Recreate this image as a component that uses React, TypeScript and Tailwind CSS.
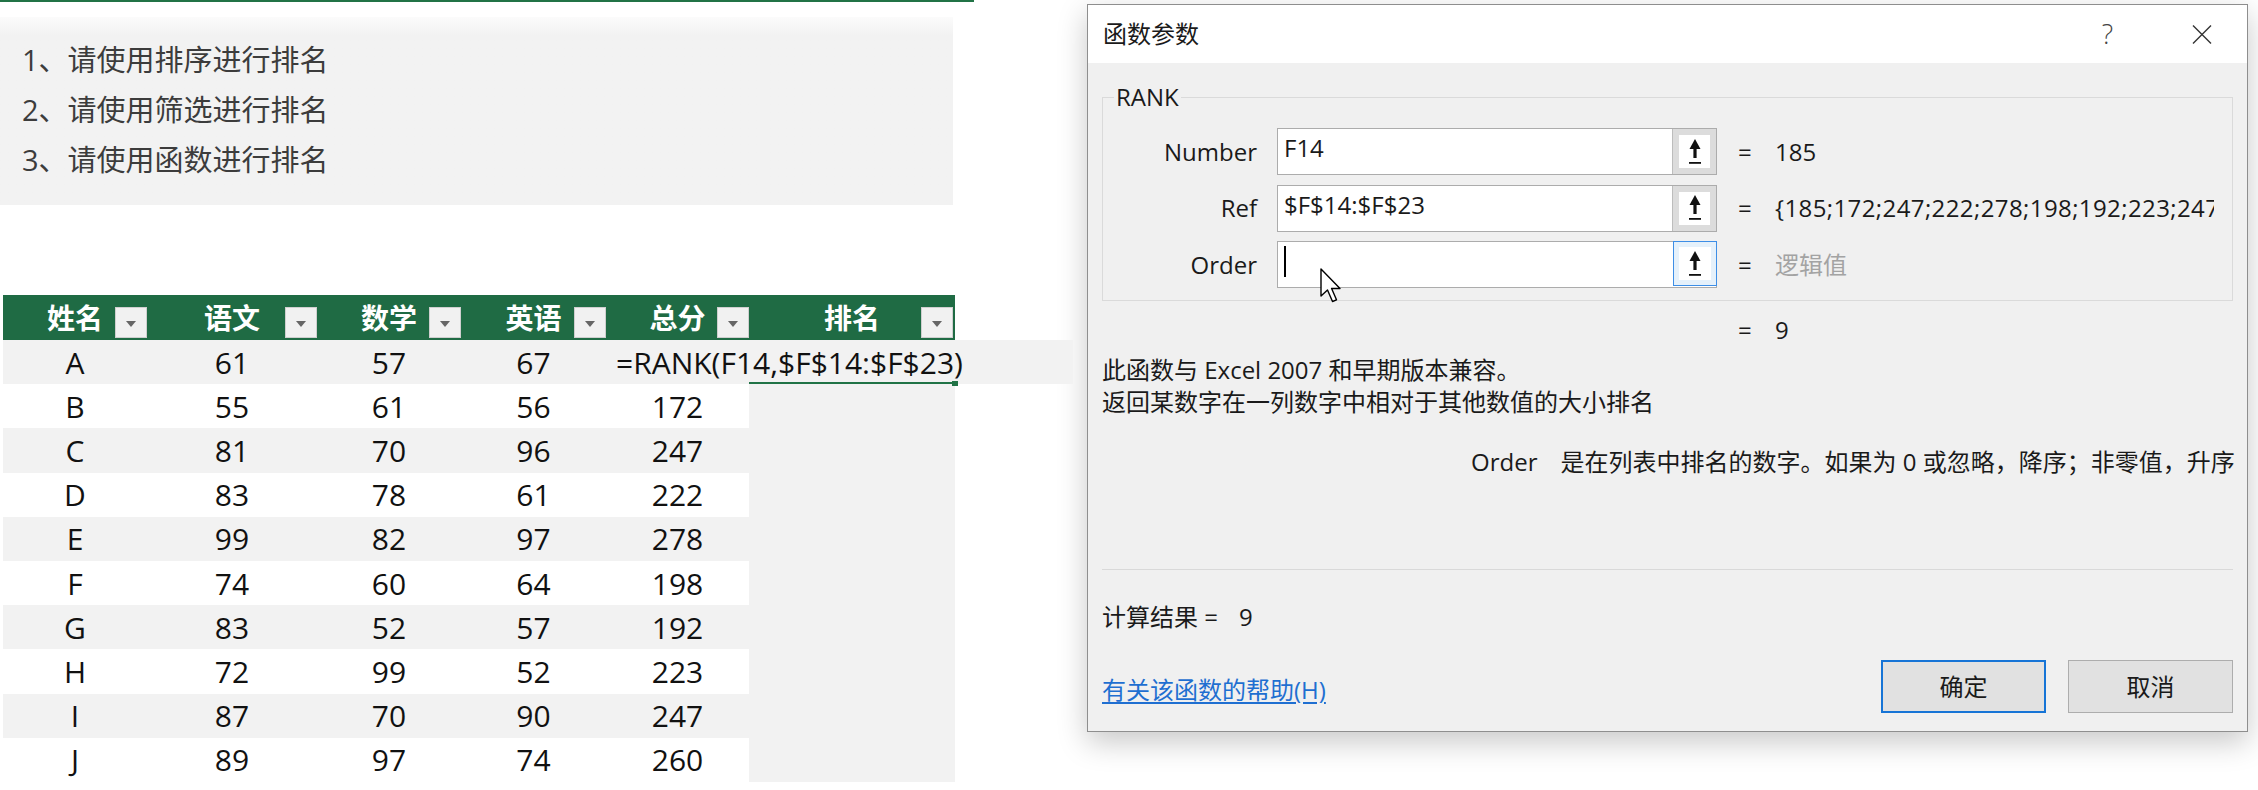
import React from 'react';

const widths = ['w-[144px]', 'w-[170px]', 'w-[144px]', 'w-[145px]', 'w-[143px]', 'w-[206px]'];
const headers = ['姓名', '语文', '数学', '英语', '总分', '排名'];
const rows: [string, number, number, number, number][] = [
  ['A', 61, 57, 67, 185],
  ['B', 55, 61, 56, 172],
  ['C', 81, 70, 96, 247],
  ['D', 83, 78, 61, 222],
  ['E', 99, 82, 97, 278],
  ['F', 74, 60, 64, 198],
  ['G', 83, 52, 57, 192],
  ['H', 72, 99, 52, 223],
  ['I', 87, 70, 90, 247],
  ['J', 89, 97, 74, 260],
];

function Tri() {
  return (
    <svg width="10" height="6" viewBox="0 0 10 6">
      <polygon points="0,0 10,0 5,6" fill="#666" />
    </svg>
  );
}

function RefArrow() {
  return (
    <svg width="16" height="26" viewBox="0 0 16 26">
      <polygon points="8,0 2.5,10 13.5,10" fill="#111" />
      <rect x="6.4" y="9" width="3.2" height="10" fill="#111" />
      <rect x="2" y="23" width="12" height="1.8" fill="#111" />
    </svg>
  );
}

function Cursor() {
  return (
    <svg width="24" height="36" viewBox="0 0 24 36">
      <path
        d="M1 1 L1 28 L7.5 22 L12.5 33.5 L16.5 31.8 L11.6 20.5 L20 20.5 Z"
        fill="#fff"
        stroke="#000"
        strokeWidth="1.4"
        strokeLinejoin="round"
      />
    </svg>
  );
}

function ParamRow({
  label,
  value,
  result,
  muted,
  focused,
  caret,
  clip,
}: {
  label: string;
  value?: string;
  result: string;
  muted?: boolean;
  focused?: boolean;
  caret?: boolean;
  clip?: boolean;
}) {
  return (
    <div className="flex items-center h-[47px]">
      <div className="w-[154px] text-right leading-[28px]">{label}</div>
      <div className="ml-[20px] w-[440px] h-[47px] border border-[#acacac] bg-white flex relative">
        <div className="flex-1 pl-[6px] pt-[5px] leading-[28px] whitespace-nowrap">
          {value}
          {caret && <span className="inline-block w-[2px] h-[31px] bg-black -mt-[1px] align-top" />}
        </div>
        {focused ? (
          <div className="w-[44px] h-full border border-[#3d8ee6] bg-[#e5f1fb] p-[5px] -m-px">
            <div className="w-full h-full bg-white flex items-center justify-center">
              <RefArrow />
            </div>
          </div>
        ) : (
          <div className="w-[44px] h-full border-l border-[#bdbdbd] bg-[#dcdcdc] p-[6px]">
            <div className="w-full h-full bg-white flex items-center justify-center">
              <RefArrow />
            </div>
          </div>
        )}
        {caret && (
          <div className="absolute left-[42px] top-[26px] z-10">
            <Cursor />
          </div>
        )}
      </div>
      <div className="ml-[21px] w-[37px]">=</div>
      {clip ? (
        <div className="w-[439px] overflow-hidden whitespace-nowrap leading-[36px] tracking-[0.4px]">
          {result}
        </div>
      ) : (
        <div className={`whitespace-nowrap ${muted ? 'text-[#a3a3a3]' : ''}`}>{result}</div>
      )}
    </div>
  );
}

export default function App() {
  return (
    <div className="w-[2258px] h-[790px] bg-white flex overflow-hidden font-['Open_Sans','Noto_Sans_CJK_SC',sans-serif]">
      {/* Spreadsheet side */}
      <div className="w-[1087px] shrink-0 flex flex-col">
        <div className="h-[2px] w-[974px] bg-[#217346]" />
        <div className="mt-[15px] w-[953px] h-[188px] bg-linear-to-b from-[#fbfbfb] to-[#f2f2f2] to-10% pl-[22px] pt-[18px] text-[29px] leading-[50px] text-[#3c3c3c]">
          <div>1、请使用排序进行排名</div>
          <div>2、请使用筛选进行排名</div>
          <div>3、请使用函数进行排名</div>
        </div>

        <div className="mt-[90px] ml-[3px] flex flex-col">
          <div className="flex h-[45px] w-[952px] bg-[#1f6b44] text-white font-bold text-[28px]">
            {headers.map((h, i) => (
              <div key={h} className={`${widths[i]} relative flex items-center justify-center`}>
                {h}
                <div
                  className={`absolute bottom-[2px] ${
                    i === 5 ? 'right-[2px]' : 'right-0'
                  } w-[32px] h-[31px] bg-[#f1f1f1] border border-[#cfcfcf] flex items-center justify-center pt-[2px]`}
                >
                  <Tri />
                </div>
              </div>
            ))}
          </div>

          {rows.map((r, idx) => {
            const band = idx % 2 === 0 ? 'bg-[#f2f2f2]' : 'bg-white';
            if (idx === 0) {
              return (
                <div key={r[0]} className="flex h-[44.2px] text-[30px] text-[#111]">
                  {r.slice(0, 4).map((v, i) => (
                    <div key={i} className={`${widths[i]} ${band} flex items-center justify-center`}>
                      {v}
                    </div>
                  ))}
                  <div className="w-[467px] bg-[#f2f2f2] flex items-center pl-[10px] relative whitespace-nowrap">
                    =RANK(F14,$F$14:$F$23)
                    <div className="absolute left-[143px] bottom-0 w-[206px] h-[2px] bg-[#217346]" />
                    <div className="absolute left-[346px] bottom-[-2px] w-[6px] h-[5px] bg-[#217346]" />
                  </div>
                </div>
              );
            }
            return (
              <div key={r[0]} className="flex h-[44.2px] text-[30px] text-[#111]">
                {r.map((v, i) => (
                  <div key={i} className={`${widths[i]} ${band} flex items-center justify-center`}>
                    {v}
                  </div>
                ))}
                <div className="w-[206px] bg-[#f2f2f2]" />
              </div>
            );
          })}
        </div>
      </div>

      {/* Dialog */}
      <div className="mt-[4px] w-[1161px] h-[728px] shrink-0 border border-[#8e8e8e] bg-[#f0f0f0] shadow-[0_10px_28px_rgba(0,0,0,0.22)] flex flex-col text-[24px] text-[#1a1a1a]">
        <div className="h-[58px] bg-white flex items-center pl-[15px]">
          <span className="leading-[28px]">函数参数</span>
          <span className="ml-auto text-[27px] text-[#444] font-light leading-[28px]">?</span>
          <svg className="ml-[79px] mr-[35px]" width="20" height="19" viewBox="0 0 20 19">
            <path d="M1 0.5 L19 18.5 M19 0.5 L1 18.5" stroke="#333" strokeWidth="1.4" fill="none" />
          </svg>
        </div>

        <div className="flex-1 flex flex-col px-[14px]">
          <fieldset className="mt-[20px] border border-[#dadada] pb-[12px]">
            <legend className="ml-[11px] px-[2px] leading-[28px]">RANK</legend>
            <div className="mt-[17px] flex flex-col gap-[9.5px]">
              <ParamRow label="Number" value="F14" result="185" />
              <ParamRow
                label="Ref"
                value="$F$14:$F$23"
                result="{185;172;247;222;278;198;192;223;247;260}"
                clip
              />
              <ParamRow label="Order" result="逻辑值" muted focused caret />
            </div>
          </fieldset>

          <div className="mt-[15px] flex h-[28px] items-center">
            <div className="w-[636px]" />
            <div className="w-[37px]">=</div>
            <div>9</div>
          </div>

          <div className="mt-[10px] leading-[32px]">
            <div>此函数与 Excel 2007 和早期版本兼容。</div>
            <div>返回某数字在一列数字中相对于其他数值的大小排名</div>
          </div>

          <div className="mt-[28px] leading-[32px] flex whitespace-nowrap">
            <span className="ml-[369px]">Order</span>
            <span className="ml-[23px]">是在列表中排名的数字。如果为 0 或忽略，降序；非零值，升序</span>
          </div>

          <div className="mt-[91px] h-px bg-[#d9d9d9]" />

          <div className="mt-[33px] leading-[28px] flex">
            <span>计算结果 =</span>
            <span className="ml-[21px]">9</span>
          </div>

          <div className="mt-[29px] flex items-center h-[53px]">
            <span className="mt-[7px] leading-[28px] text-[#1f6fd1] underline underline-offset-[3px]">
              有关该函数的帮助(H)
            </span>
            <div className="ml-auto flex gap-[22px]">
              <div className="w-[165px] h-[53px] border-2 border-[#1674d6] bg-[#e1e1e1] flex items-center justify-center">
                确定
              </div>
              <div className="w-[165px] h-[53px] border border-[#adadad] bg-[#e1e1e1] flex items-center justify-center">
                取消
              </div>
            </div>
          </div>
        </div>
      </div>
    </div>
  );
}
